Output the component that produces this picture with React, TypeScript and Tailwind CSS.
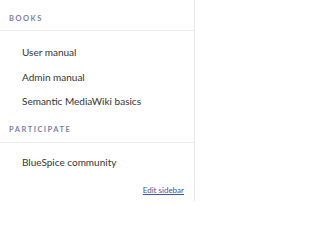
import React from "react";

export default function App() {
  const lato = { fontFamily: "Lato, 'Noto Sans', sans-serif" };
  return (
    <div className="w-[200px] h-[201px] bg-white overflow-hidden" style={lato}>
      <div className="w-[195px] h-[201px] border-r border-[#e8e8e8] flex flex-col">
        <div className="h-[31px] border-b border-[#ececec] pl-[9px] pt-[14px] text-[7.5px] font-bold tracking-[0.2em] text-[#7a7fa6] leading-[9px]">
          BOOKS
        </div>
        <div className="flex flex-col pl-[22px] pt-[14px] text-[10px] text-[#333] leading-[14px] gap-[10.5px]">
          <span>User manual</span>
          <span>Admin manual</span>
          <span>Semantic MediaWiki basics</span>
        </div>
        <div className="h-[35px] border-b border-[#ececec] pl-[9px] pt-[17px] text-[7.5px] font-bold tracking-[0.2em] text-[#7a7fa6] leading-[9px]">
          PARTICIPATE
        </div>
        <div className="flex flex-col pl-[22px] pt-[12px] text-[10px] text-[#333] leading-[14px]">
          <span>BlueSpice community</span>
        </div>
        <div className="flex justify-end pr-[10px] pt-[16px]">
          <a className="text-[8px] text-[#3b55a0] underline leading-[10px]">Edit sidebar</a>
        </div>
      </div>
    </div>
  );
}
